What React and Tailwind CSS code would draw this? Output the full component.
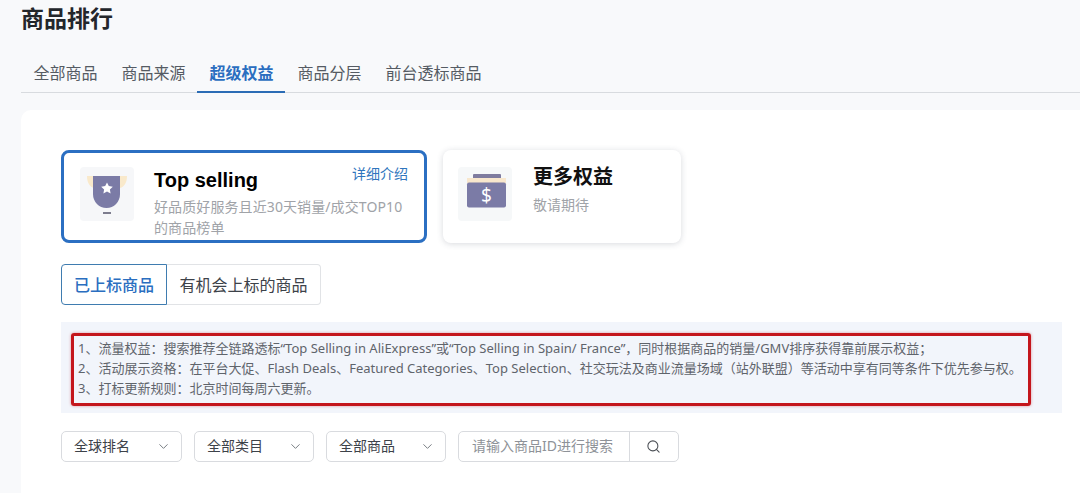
import { ChevronDown, Search } from "lucide-react";

const FONT = "[font-family:'Noto_Sans','Noto_Sans_CJK_SC',sans-serif]";

function Tab({ label, active }) {
  return (
    <div
      className={
        "h-[39px] -mb-px pl-[12.5px] pr-[11.5px] flex items-center text-base border-b-2 " +
        (active ? "border-[#2b6cb5] text-[#2a6ec0] font-semibold" : "border-transparent text-[#555b63]")
      }
    >
      {label}
    </div>
  );
}

function Select({ label, width }) {
  return (
    <div className={"h-[31px] pl-[12px] pr-[10px] pb-[1px] flex items-center justify-between border border-[#d9dbdf] rounded-[5px] bg-white text-sm text-[#3d4249] " + width}>
      <span>{label}</span>
      <ChevronDown size={15} strokeWidth={1.5} className="text-[#6f747b]" />
    </div>
  );
}

function ShieldIcon() {
  return (
    <div className="w-[54px] h-[54px] rounded-[4px] bg-[#f6f7f9] shrink-0">
      <svg width="54" height="54" viewBox="0 0 54 54">
        <path d="M7 9h7v12c-4-1-7-5-7-12zM47 9h-7v12c4-1 7-5 7-12z" fill="#f9e9cb" />
        <path d="M13 9h27v18c0 8-6 14-13.500 14S13 35 13 27z" fill="#7b7ba6" />
        <path d="M27 15.500l1.800 3.600 4 .6-2.900 2.800.7 4-3.600-1.900-3.600 1.900.7-4-2.900-2.800 4-.6z" fill="#fff" />
        <rect x="23" y="45" width="8" height="2" fill="#7d7d8e" />
      </svg>
    </div>
  );
}

function WalletIcon() {
  return (
    <div className="w-[54px] h-[54px] rounded-[4px] bg-[#f6f8f9] shrink-0">
      <svg width="54" height="54" viewBox="0 0 54 54">
        <rect x="15" y="7" width="28" height="5" rx="1" fill="#7f7c9f" />
        <rect x="9" y="11" width="39" height="5" fill="#f8e7cd" />
        <rect x="9" y="15.500" width="39" height="25" rx="2" fill="#7b7ba6" />
        <text x="28.500" y="35" textAnchor="middle" fontSize="19" fill="#fff" fontFamily="Noto Sans">$</text>
      </svg>
    </div>
  );
}

export default function App() {
  return (
    <div className={"w-[1080px] h-[493px] overflow-hidden bg-[#f8f9fb] pl-[21px] " + FONT}>
      <h1 className="h-[54px] pt-[1px] text-[23px] leading-[34px] font-semibold text-[#23262b]">商品排行</h1>
      <div className="flex h-[39px] border-b border-[#d8dbdf]">
        <Tab label="全部商品" />
        <Tab label="商品来源" />
        <Tab label="超级权益" active />
        <Tab label="商品分层" />
        <Tab label="前台透标商品" />
      </div>
      <div className="mt-[17px] h-[400px] bg-white rounded-tl-[10px] pl-[40px] pt-[40px] pr-[18px]">
        <div className="flex gap-4">
          <div className="relative w-[366px] h-[93px] rounded-[8px] border-[3px] border-[#2b6fc2] flex pl-4 pt-[14px] gap-5 bg-white">
            <ShieldIcon />
            <div className="-mt-[1px]">
              <div className="text-xl leading-[28px] font-semibold text-black [font-family:'Liberation_Sans',sans-serif]">Top selling</div>
              <div className="mt-[2px] w-[254px] text-sm tracking-[0.1px] leading-[21px] text-[#a0a3a8]">好品质好服务且近30天销量/成交TOP10的商品榜单</div>
            </div>
            <span className="absolute right-4 top-[11px] text-sm leading-[20px] text-[#2f75bd]">详细介绍</span>
          </div>
          <div className="w-[238px] h-[93px] rounded-[8px] bg-white shadow-[0_1px_6px_rgba(60,70,90,0.2)] flex pl-[15px] pt-[17px] gap-[21px]">
            <WalletIcon />
            <div className="-mt-[3px]">
              <div className="text-xl leading-[26px] font-bold text-[#111]">更多权益</div>
              <div className="mt-[5px] text-sm leading-[20px] text-[#a0a3a8]">敬请期待</div>
            </div>
          </div>
        </div>

        <div className="mt-[21px] flex h-[41px] w-[260px] text-base">
          <div className="w-[106px] flex items-center justify-center rounded-l-[4px] border border-[#3f7cb0] text-[#2a6ec0] font-medium">已上标商品</div>
          <div className="w-[154px] flex items-center justify-center rounded-r-[4px] border border-l-0 border-[#e1e3e6] text-[#3d4249]">有机会上标的商品</div>
        </div>

        <div className="relative mt-[17px] w-[1001px] h-[91px] bg-[#f2f5fb] pl-[17px] pt-[16px] text-[13px] leading-[20px] text-[#5f646b] whitespace-nowrap">
          <p>1、流量权益：搜索推荐全链路透标“Top Selling in AliExpress”或“Top Selling in Spain/ France”，同时根据商品的销量/GMV排序获得靠前展示权益；</p>
          <p>2、活动展示资格：在平台大促、Flash Deals、Featured Categories、Top Selection、社交玩法及商业流量场域（站外联盟）等活动中享有同等条件下优先参与权。</p>
          <p>3、打标更新规则：北京时间每周六更新。</p>
          <div className="absolute left-[10px] top-[11px] w-[960px] h-[73px] rounded-[3px] border-[3px] border-[#c4161c] shadow-[0_0_3px_rgba(190,30,40,0.45)]" />
        </div>

        <div className="mt-[18px] flex gap-3">
          <Select label="全球排名" width="w-[121px]" />
          <Select label="全部类目" width="w-[120px]" />
          <Select label="全部商品" width="w-[120px]" />
          <div className="w-[221px] h-[31px] flex border border-[#d9dbdf] rounded-[5px] bg-white">
            <div className="w-[171px] pl-[13px] pb-[1px] flex items-center text-sm text-[#8e9298] border-r border-[#d9dbdf]">请输入商品ID进行搜索</div>
            <div className="flex-1 pb-[1px] pr-[2px] flex items-center justify-center text-[#4a4e54]">
              <Search size={15} strokeWidth={1.7} />
            </div>
          </div>
        </div>
      </div>
    </div>
  );
}
